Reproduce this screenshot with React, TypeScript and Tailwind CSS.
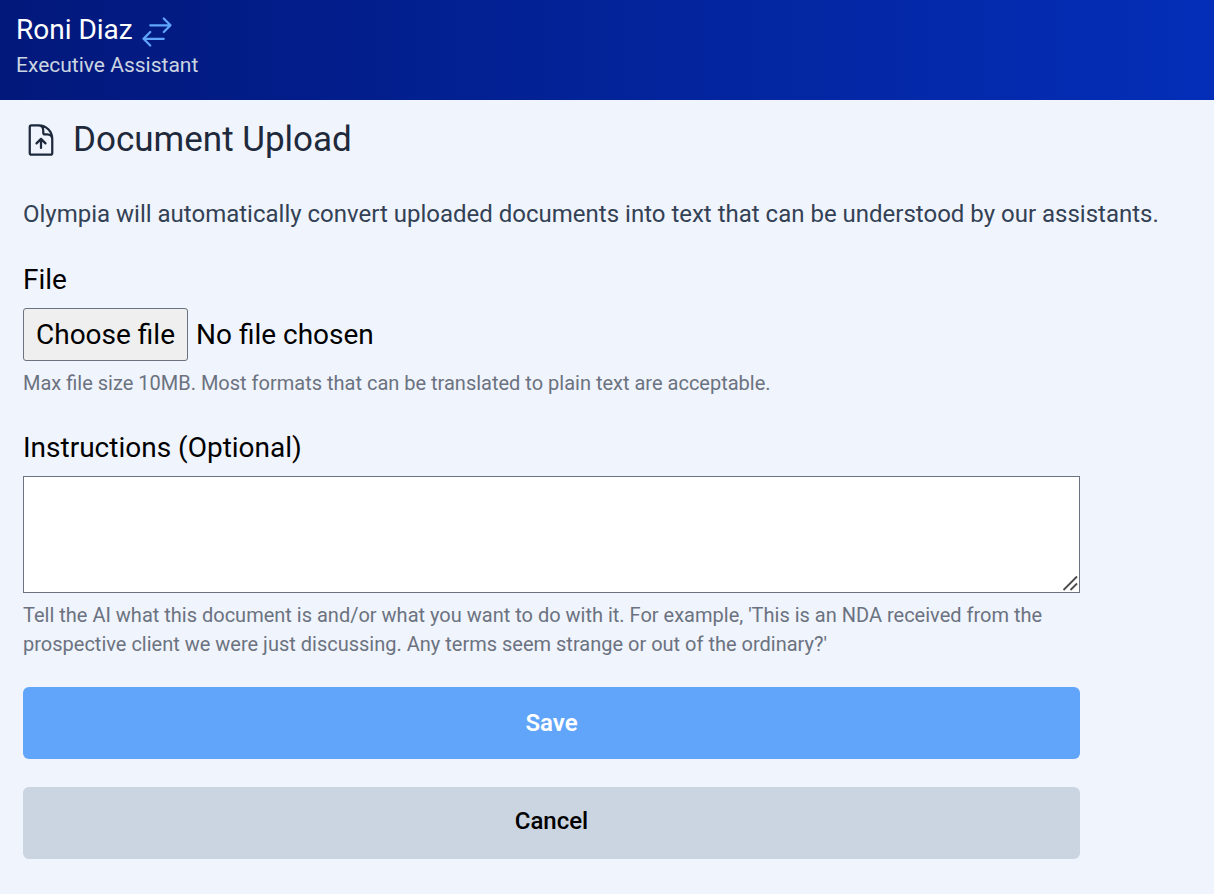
import React, { useState } from "react";
import { HiOutlineArrowsRightLeft, HiOutlineDocumentArrowUp } from "react-icons/hi2";

const Header = () => (
  <header className="bg-linear-to-r from-[#02187b] to-[#042eb8] px-4 pt-2.5 pb-5">
    <div className="flex items-center gap-1.5">
      <h2 className="text-[28px] leading-9 text-white">Roni Diaz</h2>
      <button type="button" aria-label="Switch assistant" className="mt-1 text-[#60a5fa]">
        <HiOutlineArrowsRightLeft size={36} />
      </button>
    </div>
    <p className="text-[21px] leading-[30px] text-[#cbd5e1]">Executive Assistant</p>
  </header>
);

const UploadForm = () => {
  const [fileName, setFileName] = useState("");

  return (
    <form className="mt-7 max-w-[1057px]" onSubmit={(e) => e.preventDefault()}>
      <label htmlFor="file" className="block text-[28px] leading-10">
        File
      </label>
      <div className="mt-2 flex items-center gap-2 text-[28px]">
        <input
          id="file"
          type="file"
          className="peer sr-only"
          onChange={(e) => setFileName(e.target.files?.[0]?.name ?? "")}
        />
        <label
          htmlFor="file"
          className="rounded-[3px] border border-[#6b7280] bg-[#efefef] px-3 leading-[51px] peer-focus-visible:ring-2"
        >
          Choose file
        </label>
        <span>{fileName || "No file chosen"}</span>
      </div>
      <p className="mt-2 text-xl leading-[29px] text-[#6b7280]">
        Max file size 10MB. Most formats that can be translated to plain text are acceptable.
      </p>

      <label htmlFor="instructions" className="mt-[30px] block text-[28px] leading-10">
        Instructions (Optional)
      </label>
      <div className="relative mt-2">
        <textarea
          id="instructions"
          className="block h-[117px] w-full resize-y border border-[#6b7280] bg-white p-3 text-[28px] [&::-webkit-resizer]:bg-transparent"
        />
        {/* resize grip */}
        <svg
          className="pointer-events-none absolute right-0.5 bottom-0.5"
          width="16"
          height="16"
          viewBox="0 0 16 16"
          fill="none"
          stroke="#4b4b4b"
          strokeWidth="1.8"
        >
          <path d="M1.5 15 15 1.5M8.5 15 15 8.5" />
        </svg>
      </div>
      <p className="mt-2 text-xl leading-[29px] text-[#6b7280]">
        Tell the AI what this document is and/or what you want to do with it. For example, 'This is
        an NDA received from the prospective client we were just discussing. Any terms seem strange
        or out of the ordinary?'
      </p>

      <button
        type="submit"
        className="mt-7 block h-[72px] w-full rounded-md bg-[#60a5fa] text-2xl font-semibold text-white"
      >
        Save
      </button>
      <button
        type="button"
        className="mt-7 block h-[72px] w-full rounded-md bg-[#cbd5e1] pb-1 text-2xl font-medium text-black"
      >
        Cancel
      </button>
    </form>
  );
};

export default function App() {
  return (
    <div className="min-h-screen bg-[#f0f4fc] font-[Roboto,sans-serif] text-black">
      <Header />
      <main className="px-[23px] pt-5 pb-8">
        <div className="flex items-center gap-3.5 text-[#1e293b]">
          <HiOutlineDocumentArrowUp size={36} />
          <h1 className="text-[35px] leading-10">Document Upload</h1>
        </div>
        <p className="mt-9 text-2xl leading-9 text-[#334155]">
          Olympia will automatically convert uploaded documents into text that can be understood by
          our assistants.
        </p>
        <UploadForm />
      </main>
    </div>
  );
}
